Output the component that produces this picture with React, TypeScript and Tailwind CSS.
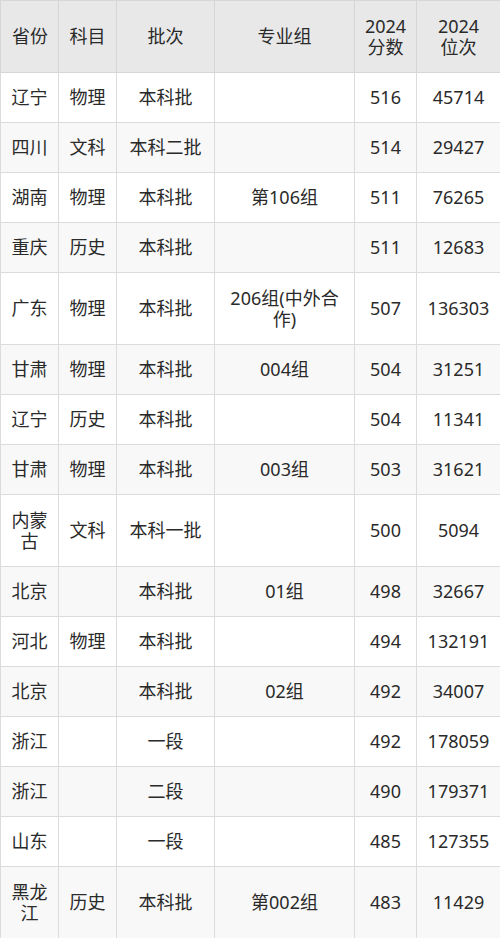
import React from "react";

const rows: string[][] = [
  ["辽宁", "物理", "本科批", "", "516", "45714"],
  ["四川", "文科", "本科二批", "", "514", "29427"],
  ["湖南", "物理", "本科批", "第106组", "511", "76265"],
  ["重庆", "历史", "本科批", "", "511", "12683"],
  ["广东", "物理", "本科批", "206组(中外合作)", "507", "136303"],
  ["甘肃", "物理", "本科批", "004组", "504", "31251"],
  ["辽宁", "历史", "本科批", "", "504", "11341"],
  ["甘肃", "物理", "本科批", "003组", "503", "31621"],
  ["内蒙古", "文科", "本科一批", "", "500", "5094"],
  ["北京", "", "本科批", "01组", "498", "32667"],
  ["河北", "物理", "本科批", "", "494", "132191"],
  ["北京", "", "本科批", "02组", "492", "34007"],
  ["浙江", "", "一段", "", "492", "178059"],
  ["浙江", "", "二段", "", "490", "179371"],
  ["山东", "", "一段", "", "485", "127355"],
  ["黑龙江", "历史", "本科批", "第002组", "483", "11429"],
];

const widths = ["w-[58px]", "w-[58px]", "w-[98px]", "w-[140px]", "w-[62px]", "w-[84px]"];

export default function App() {
  return (
    <div
      className="w-[500px] bg-white text-[#2a2a2a] text-[18px] leading-[21px]"
      style={{ fontFamily: '"Noto Sans", "Noto Sans CJK SC", sans-serif' }}
    >
      <table className="w-[500px] table-fixed border-collapse">
        <colgroup>
          {widths.map((w, i) => (
            <col key={i} className={w} />
          ))}
        </colgroup>
        <thead>
          <tr className="bg-[#e8e8e8] h-[72px]">
            {["省份", "科目", "批次", "专业组", "2024\n分数", "2024\n位次"].map((h, i) => (
              <th
                key={i}
                className={`border border-[#d6d6d6] px-[6px] font-normal whitespace-pre-line ${i === 0 ? "text-left pl-[11px]" : "text-center"}`}
              >
                {h}
              </th>
            ))}
          </tr>
        </thead>
        <tbody>
          {rows.map((r, ri) => (
            <tr key={ri} className={`${ri % 2 === 1 ? "bg-[#f8f8f8]" : "bg-white"} ${r[0].length > 2 || r[3].length > 7 ? "h-[72px]" : "h-[50px]"}`}>
              {r.map((c, ci) => (
                <td
                  key={ci}
                  className={`border border-[#dcdcdc] px-[6px] py-[4px] align-middle ${ci === 0 ? "text-center px-[10px]" : "text-center"}`}
                >
                  {c}
                </td>
              ))}
            </tr>
          ))}
        </tbody>
      </table>
    </div>
  );
}
